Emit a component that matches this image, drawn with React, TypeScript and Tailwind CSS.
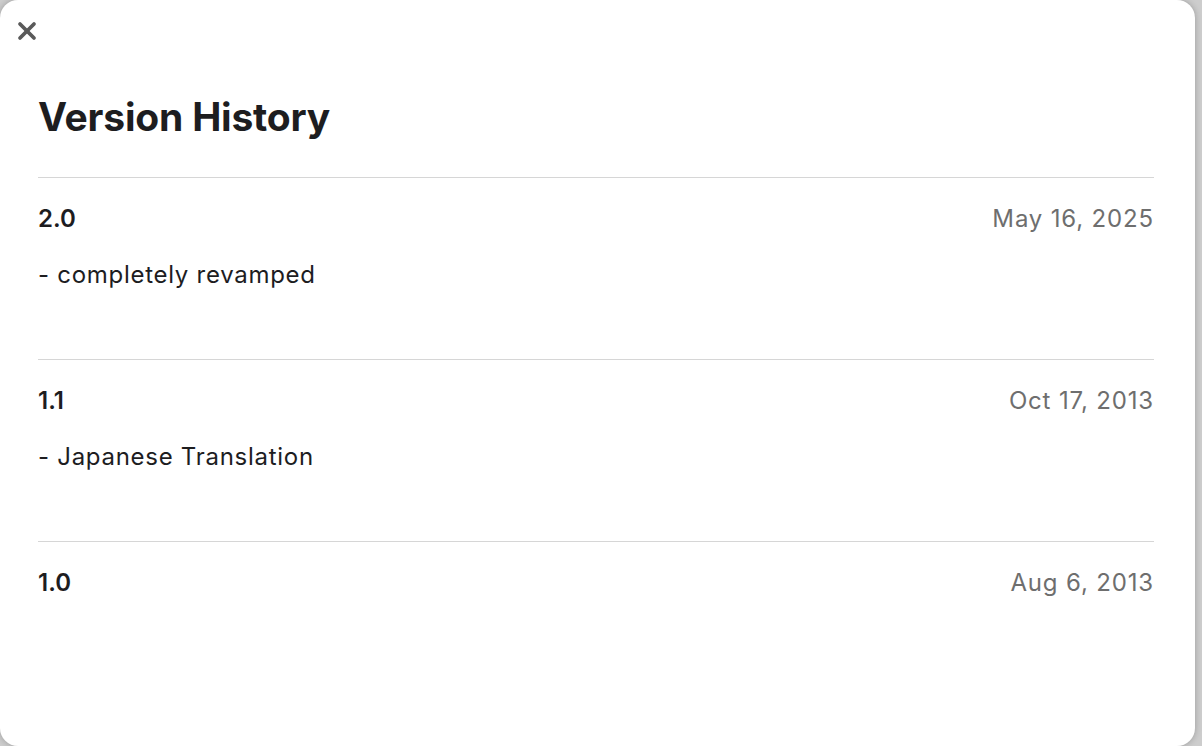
import { X } from 'lucide-react'

type Version = {
  number: string
  date: string
  notes?: string
}

const versions: Version[] = [
  { number: '2.0', date: 'May 16, 2025', notes: '- completely revamped' },
  { number: '1.1', date: 'Oct 17, 2013', notes: '- Japanese Translation' },
  { number: '1.0', date: 'Aug 6, 2013' },
]

function VersionRow({ version }: { version: Version }) {
  return (
    <div className="h-[182px] border-t border-[#d6d6d6] pt-[26px]">
      <div className="flex items-center justify-between leading-[30px]">
        <span className="text-[24px] font-semibold text-[#1d1d1f]">{version.number}</span>
        <span className="text-[24px] tracking-[0.035em] text-[#6e6e6e]">{version.date}</span>
      </div>
      {version.notes && (
        <p className="mt-[26px] text-[24px] leading-[30px] tracking-[0.03em] text-[#1d1d1f]">
          {version.notes}
        </p>
      )}
    </div>
  )
}

export default function App() {
  return (
    <div
      className="flex h-[746px] w-[1202px] overflow-hidden bg-[#cdcdcd]"
      style={{ fontFamily: 'Inter, "Noto Sans", sans-serif' }}
    >
      <div className="relative h-[746px] w-[1195px] shrink-0 rounded-[18px] bg-white shadow-[0_0_6px_rgba(0,0,0,0.25)]">
        {/* Close button */}
        <button
          className="absolute left-[13px] top-[17px] flex h-[28px] w-[28px] items-center justify-center text-[#5a5a5a]"
          aria-label="Close"
        >
          <X className="h-[28px] w-[28px]" strokeWidth={3.2} />
        </button>

        <div className="px-[38px] pt-[95px]">
          <h2 className="pb-[38px] text-[39px] font-bold leading-[44px] tracking-[-0.005em] text-[#1d1d1f]">
            Version History
          </h2>
          <div className="w-[1116px]">
            {versions.map((v) => (
              <VersionRow key={v.number} version={v} />
            ))}
          </div>
        </div>
      </div>
    </div>
  )
}
